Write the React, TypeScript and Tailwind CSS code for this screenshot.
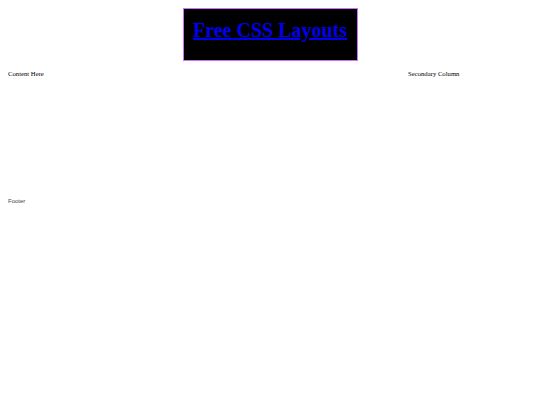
export default function App() {
  return (
    <div className="min-h-[405px] bg-white font-['Liberation_Serif',serif] text-black">
      <div className="pt-2">
        <div className="mx-auto h-[53px] w-[175px] border border-[#d070ff] bg-black pt-[10px] text-center">
          <a href="#" className="text-[20px] font-bold leading-[23px] text-[#0000ee] underline">
            Free CSS Layouts
          </a>
        </div>
      </div>
      <div className="flex h-[136px] pt-[9px] text-[6.7px] leading-[8px]">
        <div className="flex-1 pl-2">Content Here</div>
        <div className="w-[132px]">Secondary Column</div>
      </div>
      <div className="pl-2 font-['Liberation_Sans',sans-serif] text-[6px] leading-[8px] text-[#444]">
        Footer
      </div>
    </div>
  );
}
